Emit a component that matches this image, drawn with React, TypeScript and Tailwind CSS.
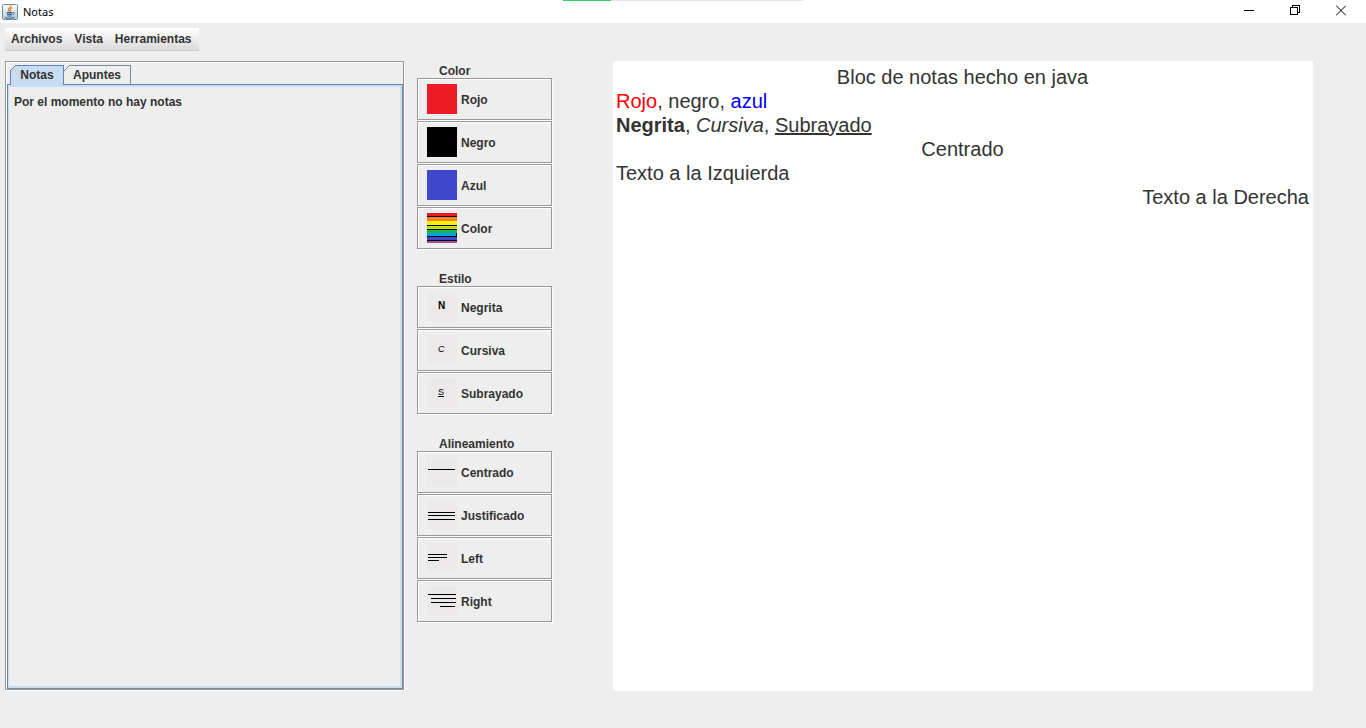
import type { ReactNode } from "react";

const ICON_BG = "#ebe9ea";

function IconCanvas({ children, bg = ICON_BG }: { children?: ReactNode; bg?: string }) {
  return (
    <svg width="30" height="30" viewBox="0 0 30 30" shapeRendering="crispEdges" aria-hidden="true" className="shrink-0">
      <rect width="30" height="30" fill={bg} />
      {children}
    </svg>
  );
}

// Each line is [x, y, width].
function LinesIcon({ lines }: { lines: number[][] }) {
  return (
    <IconCanvas>
      {lines.map(([x, y, w]) => (
        <rect key={y} x={x} y={y} width={w} height="1" fill="#000" />
      ))}
    </IconCanvas>
  );
}

// Each stripe is [y, height, fill].
const STRIPES: [number, number, string][] = [
  [0, 3, "#ed1c24"],
  [4, 4, "#ff7f27"],
  [8, 4, "#fff200"],
  [13, 3, "#b5e61d"],
  [17, 3, "#22b14c"],
  [20, 3, "#00a2e8"],
  [24, 3, "#3f48cc"],
  [28, 2, "#a349a4"],
];

function RainbowIcon() {
  return (
    <IconCanvas bg="#000">
      {STRIPES.map(([y, h, fill]) => (
        <rect key={y} x="0" y={y} width={fill === "#00a2e8" ? 29 : 30} height={h} fill={fill} />
      ))}
    </IconCanvas>
  );
}

function LetterIcon({ className, children }: { className: string; children: string }) {
  return (
    <span aria-hidden="true" className="flex h-[30px] w-[30px] shrink-0 bg-[#ebe9ea] pt-2 pl-[11px] leading-3 text-black">
      <span className={className}>{children}</span>
    </span>
  );
}

function JavaIcon() {
  return (
    <svg width="16" height="16" viewBox="0 0 16 16" aria-hidden="true" fill="none">
      <defs>
        <linearGradient id="tile" x1="0" y1="0" x2="0" y2="1">
          <stop offset="0" stopColor="#ffffff" />
          <stop offset="1" stopColor="#b4c8d4" />
        </linearGradient>
      </defs>
      <rect x="0.5" y="0.5" width="15" height="15" rx="1" fill="url(#tile)" stroke="#6e8ea3" />
      <path d="M8.8 1.6c.6 1.6-2.6 2.4-2.4 4 .1.8 1 1.2 1.3 2" stroke="#e8762c" strokeWidth="1.3" />
      <path d="M10.4 3.6c-1.4.6-2.2 1.2-1.9 2.1.2.6.5 1 0 1.8" stroke="#e8762c" strokeWidth="1.1" />
      <path d="M4.6 8.6h5.8M5 10.4h5M3 13.4c2.6.9 7.4.9 9.6-.1M5.4 12h4.4" stroke="#35678a" strokeWidth="1.1" />
      <path d="M10.6 8.6c2.4-.7 2.4 1.5.2 2.2" stroke="#35678a" strokeWidth="1" />
    </svg>
  );
}

type Tool = { label: string; icon: ReactNode };

const GROUPS: { title: string; tools: Tool[] }[] = [
  {
    title: "Color",
    tools: [
      { label: "Rojo", icon: <IconCanvas bg="#ed1c24" /> },
      { label: "Negro", icon: <IconCanvas bg="#000000" /> },
      { label: "Azul", icon: <IconCanvas bg="#3f48cc" /> },
      { label: "Color", icon: <RainbowIcon /> },
    ],
  },
  {
    title: "Estilo",
    tools: [
      { label: "Negrita", icon: <LetterIcon className="text-[10px] font-bold">N</LetterIcon> },
      { label: "Cursiva", icon: <LetterIcon className="text-[9px] font-normal italic">C</LetterIcon> },
      { label: "Subrayado", icon: <LetterIcon className="text-[9px] font-normal underline">S</LetterIcon> },
    ],
  },
  {
    title: "Alineamiento",
    tools: [
      { label: "Centrado", icon: <LinesIcon lines={[[1, 12, 27]]} /> },
      { label: "Justificado", icon: <LinesIcon lines={[[1, 12, 27], [1, 15, 27], [1, 19, 27]]} /> },
      { label: "Left", icon: <LinesIcon lines={[[1, 11, 19], [1, 14, 19], [1, 17, 11]]} /> },
      { label: "Right", icon: <LinesIcon lines={[[1, 8, 28], [4, 12, 25], [4, 16, 25], [13, 20, 15]]} /> },
    ],
  },
];

function TitleBar() {
  return (
    <header className="relative flex h-[23px] items-center justify-between bg-white pr-0.5 pl-0.5">
      <div className="flex items-center gap-[5px]">
        <JavaIcon />
        <h1 className="font-['Noto_Sans',sans-serif] text-[11px] leading-4 font-normal text-black">Notas</h1>
      </div>
      <div className="absolute inset-x-0 top-0 mx-auto flex h-px w-60 bg-[#e5e5e5]">
        <div className="w-1/5 bg-[#3cc864]" />
      </div>
      <div className="flex h-full pb-0.5 text-black">
        <button type="button" aria-label="Minimizar" className="flex w-[46px] items-center justify-center">
          <svg width="10" height="11" shapeRendering="crispEdges">
            <rect x="0" y="5" width="10" height="1" fill="currentColor" />
          </svg>
        </button>
        <button type="button" aria-label="Restaurar" className="flex w-[46px] items-center justify-center">
          <svg width="11" height="11" fill="none" stroke="currentColor" shapeRendering="crispEdges">
            <path d="M0.5 2.5h7v7h-7zM2.5 2.5v-2h7v7h-2" />
          </svg>
        </button>
        <button type="button" aria-label="Cerrar" className="flex w-[46px] items-center justify-center">
          <svg width="10" height="11" fill="none" stroke="currentColor">
            <path d="M0 0.5l10 10M10 0.5l-10 10" />
          </svg>
        </button>
      </div>
    </header>
  );
}

function MenuBar() {
  return (
    <nav className="mt-[5px] ml-[5px] flex h-[23px] gap-3 self-start border-b border-[#ccc] bg-linear-to-b from-white to-[#dadada] pr-[7px] pl-1.5">
      {["Archivos", "Vista", "Herramientas"].map((item) => (
        <button key={item} type="button" className="font-bold">
          {item}
        </button>
      ))}
    </nav>
  );
}

function TabCorner({ fill, stroke }: { fill: string; stroke: string }) {
  return (
    <svg width="6" height="6" viewBox="0 0 6 6" aria-hidden="true" className="absolute -top-px -left-px">
      <path d="M0 0H6V1L1 6H0Z" fill="#eee" />
      <path d="M6 0.5L0.5 6H6Z" fill={fill} />
      <path d="M6 0L0 6" stroke={stroke} />
    </svg>
  );
}

function NotesPanel() {
  return (
    <section className="mr-px mb-px flex w-[399px] shrink-0 flex-col border border-[#999] shadow-[1px_1px_0_#fff,inset_1px_1px_0_#fff]">
      <div role="tablist" className="flex pt-[3px] pl-1">
        <button
          type="button"
          role="tab"
          id="tab-notas"
          aria-selected="true"
          aria-controls="panel-notas"
          className="relative z-10 -mb-px h-5 w-[54px] border border-b-0 border-[#6382bf] bg-[#c8ddf2] pb-px font-bold"
        >
          <TabCorner fill="#c8ddf2" stroke="#6382bf" />
          Notas
        </button>
        <button
          type="button"
          role="tab"
          aria-selected="false"
          className="relative h-[19px] w-[67px] border border-b-0 border-l-0 border-[#7a8a99] font-bold"
        >
          <svg width="6" height="6" viewBox="0 0 6 6" aria-hidden="true" className="absolute -top-px left-0">
            <path d="M0 0H6L0 6Z" fill="#eee" />
            <path d="M6 0L0 6" stroke="#7a8a99" />
          </svg>
          Apuntes
        </button>
      </div>
      <div
        role="tabpanel"
        id="panel-notas"
        aria-labelledby="tab-notas"
        className="ml-px flex-1 border border-[#6382bf] border-r-[#7a8a99] border-b-[#7a8a99]"
      >
        <div className="h-full border-2 border-l border-[#c8ddf2] px-[5px] py-1.5">
          <p className="font-bold">Por el momento no hay notas</p>
        </div>
      </div>
    </section>
  );
}

function ToolColumn() {
  return (
    <aside className="flex w-[136px] shrink-0 flex-col gap-[19px]">
      {GROUPS.map((group) => (
        <section key={group.title} aria-label={group.title}>
          <h2 className="h-[17px] pl-[22px] leading-5 font-bold">{group.title}</h2>
          <div className="flex flex-col gap-px pr-px pb-px">
            {group.tools.map((tool) => (
              <button
                key={tool.label}
                type="button"
                className="flex h-[42px] items-center gap-1 border border-[#999] pl-[9px] font-bold shadow-[1px_1px_0_#fff,inset_1px_1px_0_#fff]"
              >
                {tool.icon}
                <span className="pt-0.5">{tool.label}</span>
              </button>
            ))}
          </div>
        </section>
      ))}
    </aside>
  );
}

function Editor() {
  return (
    <article
      contentEditable
      suppressContentEditableWarning
      role="textbox"
      aria-multiline="true"
      aria-label="Bloc de notas"
      className="ml-12 min-w-0 flex-1 bg-white py-1 pr-1 pl-[3px] text-[20px] leading-6 outline-none"
    >
      <p className="text-center">Bloc de notas hecho en java</p>
      <p>
        <span className="text-[#ff0000]">Rojo</span>, negro, <span className="text-[#0000ff]">azul</span>
      </p>
      <p>
        <b>Negrita</b>, <i>Cursiva</i>, <u>Subrayado</u>
      </p>
      <p className="text-center">Centrado</p>
      <p>Texto a la Izquierda</p>
      <p className="text-right">Texto a la Derecha</p>
    </article>
  );
}

export default function App() {
  return (
    <div className="flex min-h-screen flex-col bg-[#eee] font-['Liberation_Sans',Arial,sans-serif] text-[12px] leading-[18px] text-[#333]">
      <TitleBar />
      <MenuBar />
      <main className="mt-2.5 flex flex-1 gap-3 pr-[53px] pb-[37px] pl-[5px]">
        <NotesPanel />
        <ToolColumn />
        <Editor />
      </main>
    </div>
  );
}
